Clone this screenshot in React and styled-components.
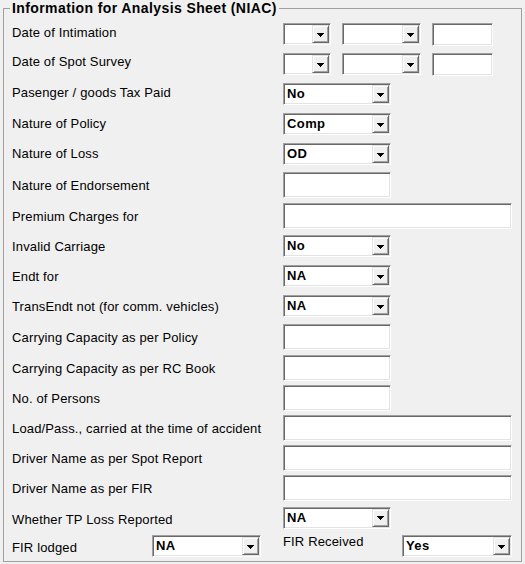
import React from 'react';
import styled, { createGlobalStyle, css } from 'styled-components';

const GlobalStyle = createGlobalStyle`
  html, body {
    margin: 0;
    padding: 0;
    background: #f0f0f0;
  }
  body {
    font-family: "Liberation Sans", Arial, sans-serif;
  }
`;

const sunken = css`
  box-sizing: border-box;
  background: #fff;
  border-style: solid;
  border-width: 1px;
  border-color: #a0a0a0 #fff #fff #a0a0a0;
  box-shadow: inset 1px 1px 0 #696969, inset -1px -1px 0 #e3e3e3;
`;

const Page = styled.div`
  width: 525px;
  height: 564px;
  box-sizing: border-box;
  padding: 0 3px 2px 3px;
  background: #f0f0f0;
`;

const Group = styled.fieldset`
  margin: 0;
  padding: 3px 0 0 8px;
  min-width: 0;
  height: 562px;
  box-sizing: border-box;
  border: 1px solid #a0a0a0;
`;

const Legend = styled.legend`
  padding: 0 2px;
  margin-left: -2px;
  font: bold 14px/16px "Liberation Sans", Arial, sans-serif;
  letter-spacing: 0.4px;
  color: #000;
`;

const Row = styled.div`
  display: flex;
  align-items: center;
  height: ${p => p.$h || 30}px;
`;

const Label = styled.span`
  flex: none;
  width: ${p => p.$w || 271}px;
  margin-left: ${p => p.$ml || 0}px;
  font-size: 13px;
  line-height: 15px;
  letter-spacing: 0.15px;
  color: #000;
  white-space: nowrap;
  transform: translateY(${p => p.$dy || 0}px);
`;

const Controls = styled.div`
  display: flex;
  align-items: center;
  gap: 11px;
`;

const TextBox = styled.div`
  ${sunken};
  flex: none;
  width: ${p => p.$w || 108}px;
  height: ${p => p.$h || 26}px;
`;

const ComboBox = styled.div`
  ${sunken};
  flex: none;
  display: flex;
  align-items: stretch;
  width: ${p => p.$w || 108}px;
  height: 22px;
  padding: 1px;
`;

const ComboValue = styled.span`
  flex: 1;
  padding-left: 2px;
  font: bold 13px/18px "Liberation Sans", Arial, sans-serif;
  letter-spacing: 0.4px;
  color: #000;
  overflow: hidden;
`;

const DropButton = styled.span`
  flex: none;
  width: 17px;
  box-sizing: border-box;
  background: #f0f0f0;
  border-style: solid;
  border-width: 1px;
  border-color: #e3e3e3 #696969 #696969 #e3e3e3;
  box-shadow: inset 1px 1px 0 #fff, inset -1px -1px 0 #a0a0a0;
  display: flex;
  align-items: center;
  justify-content: center;
  padding-top: 1px;
`;

const Arrow = () => (
  <svg width="7" height="4" viewBox="0 0 7 4" shapeRendering="crispEdges">
    <path d="M0 0h7v1H0zM1 1h5v1H1zM2 2h3v1H2zM3 3h1v1H3z" fill="#000" />
  </svg>
);

const Combo = ({ value, w }) => (
  <ComboBox $w={w}>
    <ComboValue>{value}</ComboValue>
    <DropButton>
      <Arrow />
    </DropButton>
  </ComboBox>
);

const DateControls = () => (
  <Controls>
    <Combo w={48} />
    <Combo w={79} />
    <TextBox $w={61} $h={23} />
  </Controls>
);

export default function App() {
  return (
    <>
      <GlobalStyle />
      <Page>
        <Group>
          <Legend>Information for Analysis Sheet (NIAC)</Legend>

          <Row>
            <Label $dy={-2}>Date of Intimation</Label>
            <DateControls />
          </Row>
          <Row>
            <Label $dy={-3}>Date of Spot Survey</Label>
            <DateControls />
          </Row>
          <Row>
            <Label $dy={-2}>Pasenger / goods Tax Paid</Label>
            <Combo value="No" />
          </Row>
          <Row>
            <Label $dy={-1}>Nature of Policy</Label>
            <Combo value="Comp" />
          </Row>
          <Row>
            <Label $dy={-1}>Nature of Loss</Label>
            <Combo value="OD" />
          </Row>
          <Row $h={32}>
            <Label>Nature of Endorsement</Label>
            <TextBox />
          </Row>
          <Row>
            <Label>Premium Charges for</Label>
            <TextBox $w={229} />
          </Row>
          <Row>
            <Label>Invalid Carriage</Label>
            <Combo value="No" />
          </Row>
          <Row>
            <Label>Endt for</Label>
            <Combo value="NA" />
          </Row>
          <Row>
            <Label>TransEndt not (for comm. vehicles)</Label>
            <Combo value="NA" />
          </Row>
          <Row $h={32}>
            <Label>Carrying Capacity as per Policy</Label>
            <TextBox />
          </Row>
          <Row>
            <Label>Carrying Capacity as per RC Book</Label>
            <TextBox />
          </Row>
          <Row>
            <Label>No. of Persons</Label>
            <TextBox />
          </Row>
          <Row>
            <Label>Load/Pass., carried at the time of accident</Label>
            <TextBox $w={229} />
          </Row>
          <Row>
            <Label>Driver Name as per Spot Report</Label>
            <TextBox $w={229} />
          </Row>
          <Row>
            <Label>Driver Name as per FIR</Label>
            <TextBox $w={229} />
          </Row>
          <Row $h={29}>
            <Label $dy={2}>Whether TP Loss Reported</Label>
            <Combo value="NA" />
          </Row>
          <Row $h={28}>
            <Label $w={140} $dy={1}>FIR lodged</Label>
            <Combo value="NA" w={109} />
            <Label $w={119} $ml={22} $dy={-5}>FIR Received</Label>
            <Combo value="Yes" w={110} />
          </Row>
        </Group>
      </Page>
    </>
  );
}
